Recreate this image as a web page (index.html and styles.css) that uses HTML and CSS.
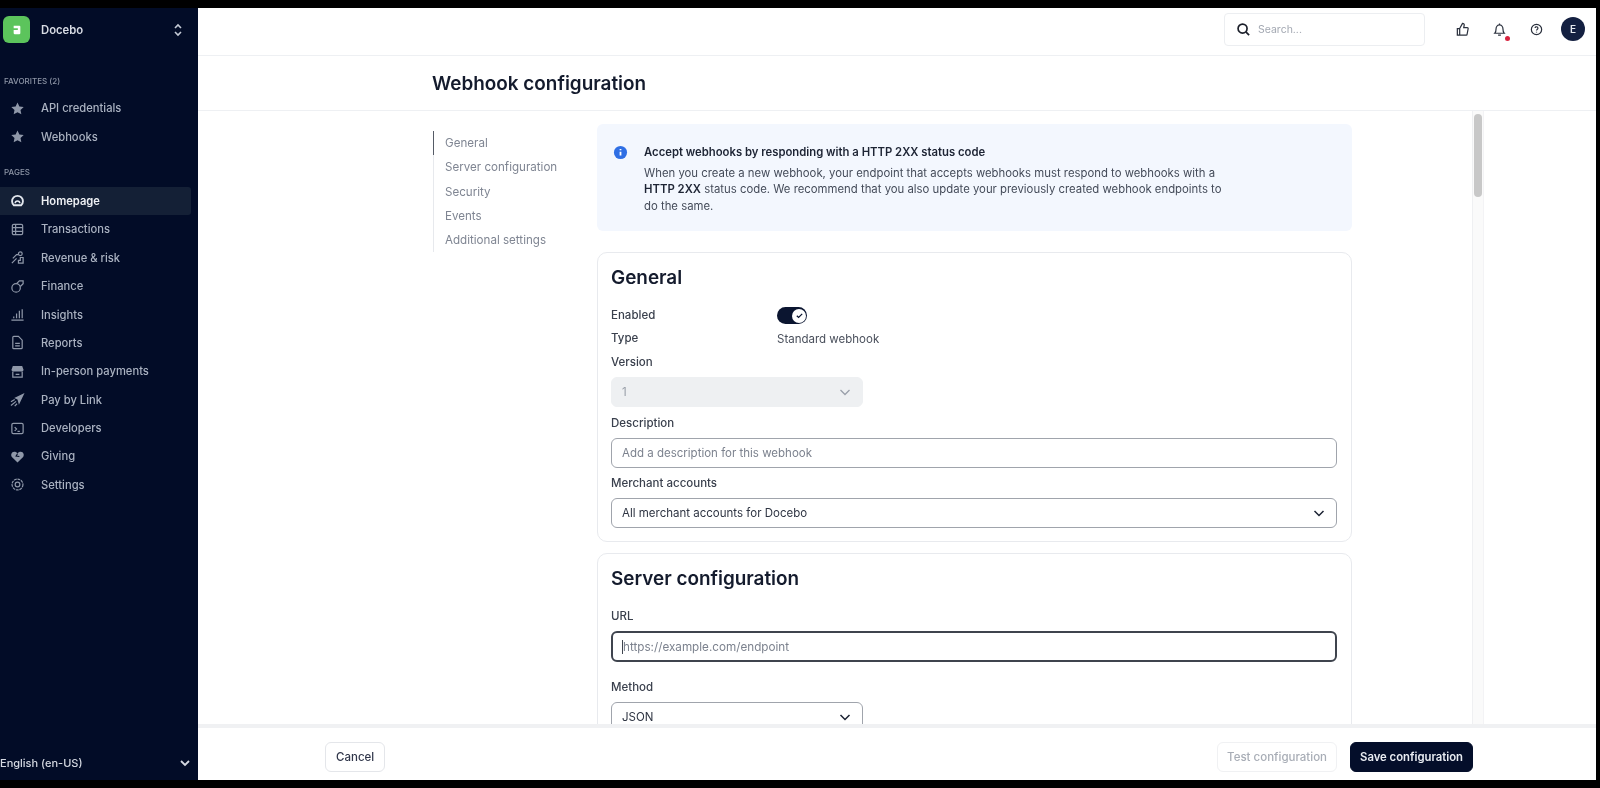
FILE: index.html
```html
<!DOCTYPE html>
<html lang="en">
<head>
<meta charset="utf-8">
<title>Webhook configuration</title>
<link rel="stylesheet" href="styles.css">
</head>
<body>
<div class="app">
  <aside class="sidebar">
    <div class="brand">
      <span class="logo"><svg viewBox="0 0 12 12" width="12" height="12"><path fill="#fff" d="M2 1h7a1 1 0 0 1 1 1v8a1 1 0 0 1-1 1H3a1 1 0 0 1-1-1V6h5V4H2z"/></svg></span>
      <span class="brand-name">Docebo</span>
      <svg class="updown" viewBox="0 0 10 16" width="10" height="16"><path d="M2 6l3-3 3 3M2 10l3 3 3-3" fill="none" stroke="#c5cbd6" stroke-width="1.6"/></svg>
    </div>
    <div class="section-label first">FAVORITES (2)</div>
    <a class="nav-row"><svg class="ico" viewBox="0 0 16 16"><path class="fill" d="M8 1.500l2 4.300 4.600.6-3.400 3.200.9 4.600L8 11.900l-4.100 2.300.9-4.600L1.400 6.400l4.600-.6z"/></svg>API credentials</a>
    <a class="nav-row"><svg class="ico" viewBox="0 0 16 16"><path class="fill" d="M8 1.500l2 4.300 4.600.6-3.400 3.200.9 4.600L8 11.900l-4.100 2.300.9-4.600L1.400 6.400l4.600-.6z"/></svg>Webhooks</a>
    <div class="section-label">PAGES</div>
    <a class="nav-row active"><svg class="ico" viewBox="0 0 16 16"><path d="M4 13a5.800 5.800 0 1 1 8 0z" fill="none" stroke="#e3e7ee" stroke-width="2"/><path d="M5.500 11a2.500 2.500 0 0 1 5 0" fill="none" stroke="#e3e7ee" stroke-width="1.600"/></svg>Homepage</a>
    <a class="nav-row"><svg class="ico" viewBox="0 0 16 16"><rect class="line" x="2.500" y="2.500" width="11" height="11" rx="1.500"/><path class="line" d="M2.500 6h11M2.500 10h11M6 2.500v11"/></svg>Transactions</a>
    <a class="nav-row"><svg class="ico" viewBox="0 0 16 16"><path class="line" d="M2 14l5-5M3 9l4-4h2M9 14h5V8h-3v3H9z"/><circle class="line" cx="11" cy="4" r="2"/></svg>Revenue &amp; risk</a>
    <a class="nav-row"><svg class="ico" viewBox="0 0 16 16"><circle class="line" cx="6.500" cy="9.500" r="4.500"/><path class="line" d="M7 5l3-3h4v3l-3 3"/></svg>Finance</a>
    <a class="nav-row"><svg class="ico" viewBox="0 0 16 16"><path class="line" d="M1.500 14h13M4 12v-2M7 12V7M10 12V4M13 12V2.500"/></svg>Insights</a>
    <a class="nav-row"><svg class="ico" viewBox="0 0 16 16"><path class="line" d="M3 2.500a1 1 0 0 1 1-1h5l4 4v8a1 1 0 0 1-1 1H4a1 1 0 0 1-1-1z"/><path class="line" d="M5.500 9h5M5.500 11.500h5"/></svg>Reports</a>
    <a class="nav-row"><svg class="ico" viewBox="0 0 16 16"><path class="fill" d="M3 2h10l1.500 4.500a2 2 0 0 1-2 1.500H3.500a2 2 0 0 1-2-1.500z"/><path class="line" d="M3 8v6h10V8M6 11h4"/></svg>In-person payments</a>
    <a class="nav-row"><svg class="ico" viewBox="0 0 16 16"><path class="fill" d="M15.500 1L4.500 6.500l3.500 1.500 1.500 5.500z"/><path class="line" d="M1 10.500L5 8M1 14.500L6.500 10M5 15l2.500-2.500"/></svg>Pay by Link</a>
    <a class="nav-row"><svg class="ico" viewBox="0 0 16 16"><rect class="line" x="2" y="2.500" width="12" height="11" rx="1.500"/><path class="line" d="M5 6.500L7 8.500 5 10.500M8 11h2.500"/></svg>Developers</a>
    <a class="nav-row"><svg class="ico" viewBox="0 0 16 16"><path class="fill" d="M8 14.500L2 8.500C.5 6.500 1.500 3 4.500 3 6 3 7.300 3.700 8 5c.7-1.300 2-2 3.500-2 3 0 4 3.500 2.500 5.500z"/><path d="M8 5L6.500 7.500 10 8" fill="none" stroke="#020c27" stroke-width="1.200"/></svg>Giving</a>
    <a class="nav-row"><svg class="ico" viewBox="0 0 16 16"><circle class="line" cx="8" cy="8" r="5.800" stroke-dasharray="3 .8"/><circle class="line" cx="8" cy="8" r="2.500"/></svg>Settings</a>
    <div class="lang">
      <span>English (en-US)</span>
      <svg viewBox="0 0 12 12" width="12" height="12"><path d="M2 4l4 4 4-4" fill="none" stroke="#d5d9e2" stroke-width="1.800"/></svg>
    </div>
  </aside>

  <main class="main">
    <header class="topbar">
      <div class="search">
        <svg viewBox="0 0 16 16" width="15" height="15"><circle cx="7" cy="7" r="4.800" fill="none" stroke="#1b1f2a" stroke-width="1.800"/><path d="M10.500 10.500L14 14" stroke="#1b1f2a" stroke-width="1.800"/></svg>
        <span>Search...</span>
      </div>
      <svg class="top-ico" viewBox="0 0 16 16"><path class="dk" d="M5 7v7H2.500V7zM5 7l3-5.500c1.300 0 2 .9 1.800 2L9.300 6H13a1 1 0 0 1 1 1.200l-1.100 5.800a1 1 0 0 1-1 1H5"/></svg>
      <span class="bell"><svg class="top-ico" viewBox="0 0 16 16"><path class="dk" d="M3 12c1-1 1.300-2 1.300-4.500C4.300 5 6 3 8 3s3.700 2 3.700 4.500c0 2.500.3 3.500 1.300 4.500zM6.500 14h3M8 1.500V3"/></svg><i class="dot"></i></span>
      <svg class="top-ico help" viewBox="0 0 16 16"><circle class="dk" cx="8" cy="8" r="5.500"/><path class="dk" d="M6.500 6.500a1.500 1.500 0 1 1 2.200 1.400c-.5.300-.7.600-.7 1.100M8 10.300v1"/></svg>
      <span class="avatar">E</span>
    </header>

    <div class="title-bar"><h1>Webhook configuration</h1></div>

    <div class="scroll">
      <div class="content">
        <nav class="anchors">
          <a class="current">General</a>
          <a>Server configuration</a>
          <a>Security</a>
          <a>Events</a>
          <a>Additional settings</a>
        </nav>
        <div class="form">
          <div class="alert">
            <svg viewBox="0 0 16 16" width="15" height="15"><circle cx="8" cy="8" r="7" fill="#2f6fe4"/><path d="M8 7.300v4M8 4.300v1.400" stroke="#fff" stroke-width="1.900"/></svg>
            <div class="alert-body">
              <strong class="alert-title">Accept webhooks by responding with a HTTP 2XX status code</strong>
              <p>When you create a new webhook, your endpoint that accepts webhooks must respond to webhooks with a<br><b>HTTP 2XX</b> status code. We recommend that you also update your previously created webhook endpoints to<br>do the same.</p>
            </div>
          </div>

          <section class="card general">
            <h2>General</h2>
            <div class="kv kv-enabled"><span class="key">Enabled</span><span class="toggle"><i><svg viewBox="0 0 10 10" width="9" height="9"><path d="M2 5.200l2 2 4-4" fill="none" stroke="#0b1530" stroke-width="1.400"/></svg></i></span></div>
            <div class="kv"><span class="key">Type</span><span class="val">Standard webhook</span></div>
            <div class="key field-label lab1">Version</div>
            <div class="control disabled short"><span>1</span><svg viewBox="0 0 12 12" width="12" height="12"><path d="M1.500 4l4.500 4.500L10.500 4" fill="none" stroke="#9aa0aa" stroke-width="1.300"/></svg></div>
            <div class="key field-label lab2">Description</div>
            <div class="control"><span class="ph">Add a description for this webhook</span></div>
            <div class="key field-label lab2">Merchant accounts</div>
            <div class="control"><span>All merchant accounts for Docebo</span><svg viewBox="0 0 12 12" width="12" height="12"><path d="M1.500 4l4.500 4.500L10.500 4" fill="none" stroke="#1b2233" stroke-width="1.500"/></svg></div>
          </section>

          <section class="card server">
            <h2>Server configuration</h2>
            <div class="key field-label lab1">URL</div>
            <div class="control focused"><span class="ph caret">https://example.com/endpoint</span></div>
            <div class="key field-label lab3">Method</div>
            <div class="control short"><span>JSON</span><svg viewBox="0 0 12 12" width="12" height="12"><path d="M1.500 4l4.500 4.500L10.500 4" fill="none" stroke="#1b2233" stroke-width="1.500"/></svg></div>
          </section>
        </div>
      </div>
      <div class="track"><div class="thumb"></div></div>
      <div class="gutter"></div>
    </div>

    <footer class="footer">
      <button class="btn cancel">Cancel</button>
      <div class="footer-right">
        <button class="btn muted">Test configuration</button>
        <button class="btn primary">Save configuration</button>
      </div>
    </footer>
  </main>
</div>
</body>
</html>
```

FILE: styles.css
```css
* { box-sizing: border-box; }
html, body { margin: 0; height: 100%; }
body {
  background: #000;
  padding: 8px 4px 8px 0;
  font-family: Inter, "Liberation Sans", sans-serif;
  font-size: 12px;
  color: #1b2233;
  overflow: hidden;
}
.app { display: flex; height: 100%; background: #fff; filter: blur(0.45px); }

.sidebar {
  width: 198px;
  flex: none;
  background: #020c27;
  color: #aab2c1;
  display: flex;
  flex-direction: column;
  padding-top: 8px;
}
.brand { display: flex; align-items: center; padding-left: 3px; height: 27px; }
.logo {
  width: 27px; height: 27px; border-radius: 6px; background: #5cc45c;
  display: flex; align-items: center; justify-content: center;
}
.logo svg { width: 10px; height: 10px; }
.brand-name { margin-left: 11px; color: #d8dce4; font-weight: 600; font-size: 11.300px; }
.updown { margin-left: auto; margin-right: 15px; }
.section-label { font-size: 8px; font-weight: 500; color: #8d95a6; padding-left: 4px; line-height: 10px; margin-top: 16px; margin-bottom: 10px; }
.section-label.first { margin-top: 33px; margin-bottom: 8px; }
.nav-row {
  display: flex; align-items: center; height: 28.400px; padding-left: 9.500px;
  font-size: 11.200px; font-weight: 500; margin-right: 7px;
  color: #aab2c1; white-space: nowrap;
}
.ico { width: 15px; height: 15px; margin-right: 16.500px; flex: none; }
.ico .fill { fill: #8f98a9; }
.ico .line { fill: none; stroke: #8f98a9; stroke-width: 1.300; }
.active { background: #142036; color: #eef0f4; font-weight: 600; border-radius: 0 3px 3px 0; }
.lang {
  margin-top: auto; height: 34px; display: flex; align-items: center;
  justify-content: space-between; padding: 0 7px 0 0; color: #d5d9e2; font-size: 11px; font-weight: 500;
}

.main { flex: 1; min-width: 0; display: flex; flex-direction: column; }
.topbar {
  height: 48px; flex: none; display: flex; align-items: center; justify-content: flex-end;
  border-bottom: 1px solid #eef0f3; padding: 0 11px 5px 0;
}
.search {
  width: 201px; height: 33px; border: 1px solid #eceef1; border-radius: 4px;
  display: flex; align-items: center; gap: 7px; padding-left: 11px;
  color: #a3a8b2; font-size: 10.500px; margin-right: 30px;
}
.top-ico { width: 15px; height: 15px; display: block; }
.top-ico .dk { fill: none; stroke: #2a303d; stroke-width: 1.300; }
.bell { position: relative; margin-left: 22px; }
.dot { position: absolute; right: -3px; bottom: -4px; width: 5px; height: 5px; border-radius: 50%; background: #d8233f; }
.help { margin-left: 22px; }
.avatar {
  margin-left: 17px; width: 24px; height: 24px; border-radius: 50%; background: #142041;
  color: #e6e9ef; font-size: 10px; font-weight: 600; display: flex; align-items: center; justify-content: center;
}
.title-bar { height: 55px; flex: none; border-bottom: 1px solid #eef0f3; padding-left: 234px; display: flex; align-items: center; }
h1 { margin: 0; font-size: 18.900px; font-weight: 600; color: #141b2d; }

.scroll { flex: 1; min-height: 0; display: flex; overflow: hidden; }
.content { flex: 1; min-width: 0; display: flex; align-items: flex-start; padding: 13px 0 0 235px; }
.anchors { width: 164px; flex: none; display: flex; flex-direction: column; border-left: 1px solid #e7e9ed; margin-top: 7px; }
.anchors a { height: 24.300px; line-height: 24px; padding-left: 11px; color: #7f8592; font-size: 11.600px; }
.anchors .current { border-left: 1px solid #555b66; margin-left: -1px; }
.form { width: 755px; flex: none; }
.alert {
  height: 107px; background: #f3f7fe; border-radius: 6px; display: flex; gap: 16px;
  padding: 21px 0 0 16px; margin-bottom: 21px;
}
.alert > svg { flex: none; }
.alert-title { display: block; font-weight: 600; font-size: 11.300px; line-height: 15px; color: #1d2434; }
.alert p { margin: 4.500px 0 0; font-size: 11.350px; line-height: 16.500px; color: #444b59; }
.alert b { font-weight: 600; color: #1d2434; }

.card { border: 1px solid #e8eaee; border-radius: 10px; padding: 12px 14px 0 13px; background: #fff; }
.general { height: 290px; margin-bottom: 11px; }
.server { height: 230px; }
h2 { margin: 0 0 13px; font-size: 18.900px; font-weight: 600; line-height: 26px; color: #141b2d; }
.kv { display: flex; align-items: center; height: 23px; }
.key { width: 166px; font-size: 11.500px; font-weight: 500; color: #3a404d; line-height: 23px; }
.val { font-size: 11.500px; color: #4a505c; }
.toggle {
  width: 30px; height: 17px; border-radius: 9px; background: #0b1530; display: flex;
  align-items: center; justify-content: flex-end; padding-right: 1px;
}
.toggle i { width: 14px; height: 14px; border-radius: 50%; background: #fff; display: flex; align-items: center; justify-content: center; }
.field-label { width: auto; height: 23px; }
.lab1 { margin-top: 1px; height: 26px; }
.lab2 { margin-top: 5.500px; height: 25px; line-height: 21px; }
.lab3 { margin-top: 14px; height: 26px; line-height: 23px; }
.control {
  height: 30px; border: 1px solid #a0a4ac; border-radius: 6px; display: flex; align-items: center;
  justify-content: space-between; padding: 0 11px 0 10px; font-size: 11.500px; color: #2e3442;
}
.short { width: 252px; }
.disabled { background: #eef0f2; border-color: #eef0f2; color: #9aa0aa; }
.ph { color: #7c828e; }
.focused { height: 31px; border: 2px solid #3f444e; padding-left: 9px; }
.caret { border-left: 1px solid #3f444e; line-height: 14px; font-size: 11.700px; }

.track { width: 12px; flex: none; background: #fafafa; border-left: 1px solid #eff0f2; border-right: 1px solid #f3f3f5; padding: 3px 1px 0; }
.thumb { height: 83px; background: #c8c8c8; border-radius: 4px; }
.gutter { width: 112px; flex: none; }

.footer {
  height: 56px; flex: none; background: #fff; border-top: 4px solid #f0f1f3;
  display: flex; align-items: center; justify-content: space-between;
  padding: 6px 123px 0 127px;
}
.footer-right { display: flex; gap: 13px; }
.btn {
  font: 500 11.500px Inter, "Liberation Sans", sans-serif; height: 30px; padding: 0 9px;
  border: 1px solid #e4e6ea; border-radius: 6px; background: #fff; color: #30364a;
}
.cancel { padding: 0 10px; }
.muted { color: #a8adb6; border-color: #f0f1f3; }
.primary { background: #040e2a; border-color: #040e2a; color: #e9ecf2; font-weight: 600; font-size: 11.300px; }
```
